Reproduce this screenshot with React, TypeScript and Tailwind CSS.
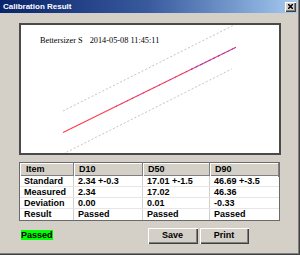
import React from 'react';

const rows = [
  ['Standard', '2.34 +-0.3', '17.01 +-1.5', '46.69 +-3.5'],
  ['Measured', '2.34', '17.02', '46.36'],
  ['Deviation', '0.00', '0.01', '-0.33'],
  ['Result', 'Passed', 'Passed', 'Passed'],
];

const headers = ['Item', 'D10', 'D50', 'D90'];
const cols = 'grid grid-cols-[54px_69px_67px_69px]';

function Bevel({ children, className = '' }: { children: React.ReactNode; className?: string }) {
  return (
    <div
      className={
        'flex items-center justify-center bg-[#d4d0c8] shadow-[inset_1px_1px_0_#ffffff,inset_-1px_-1px_0_#404040,inset_-2px_-2px_0_#808080] ' +
        className
      }
    >
      {children}
    </div>
  );
}

function Chart() {
  return (
    <div className="relative ml-[19px] mt-[10px] h-[132px] w-[262px] border-2 border-[#4a4a4a] bg-white">
      <svg className="absolute inset-0" width="258" height="128" viewBox="0 0 258 128">
        <line x1="42" y1="86" x2="215" y2="-1" stroke="#c4c4c4" strokeWidth="1" strokeDasharray="2 2" />
        <line x1="42" y1="129" x2="210.7" y2="44" stroke="#c4c4c4" strokeWidth="1" strokeDasharray="2 2" />
        <line x1="42" y1="107.5" x2="215" y2="22.3" stroke="#ff3b4e" strokeWidth="1.1" />
        <line x1="95" y1="81.4" x2="215" y2="22.3" stroke="#6a3cff" strokeWidth="1" strokeDasharray="1 5" />
        <line x1="170" y1="44.5" x2="215" y2="22.3" stroke="#6a3cff" strokeWidth="1" strokeDasharray="2 3" />
      </svg>
      <div className="relative flex pl-[19px] pt-[11px] font-['Liberation_Serif',serif] text-[8.3px] leading-[9px] text-black">
        <span>Bettersizer S</span>
        <span className="ml-[7px]">2014-05-08 11:45:11</span>
      </div>
    </div>
  );
}

function ResultTable() {
  return (
    <div className="ml-[19px] mt-[7px] w-[261px] border border-[#6a6a6a] bg-white font-['Liberation_Sans',Arial,sans-serif] text-[9px] font-bold text-black">
      <div className={cols + ' h-[13px] border-b border-[#808080] bg-[#d4d0c8]'}>
        {headers.map((h, i) => (
          <div
            key={h}
            className={
              'flex items-center border-r border-[#808080] shadow-[inset_1px_1px_0_#ffffff] ' +
              (i === 0 ? 'pl-[6px]' : 'pl-[5px]')
            }
          >
            {h}
          </div>
        ))}
      </div>
      {rows.map((r, ri) => (
        <div
          key={r[0]}
          className={cols + ' h-[11px] ' + (ri < rows.length - 1 ? 'border-b border-[#e6e6e6]' : '')}
        >
          {r.map((c, ci) => (
            <div
              key={ci}
              className={
                'flex items-center leading-none pl-[4px] ' + (ci < 3 ? 'border-r border-[#d4d0c8]' : '')
              }
            >
              {c}
            </div>
          ))}
        </div>
      ))}
    </div>
  );
}

export default function App() {
  return (
    <div className="flex h-[255px] w-[300px] flex-col overflow-hidden bg-[#d4d0c8] shadow-[inset_-1px_-1px_0_#404040,inset_-2px_-2px_0_#808080] font-['Liberation_Sans',Arial,sans-serif]">
      <div className="mr-[3px] flex h-[13px] items-center justify-between bg-linear-to-r from-[#0a246a] via-[#3a5a9e] to-[#a6caf0] pl-[3px] pr-[1px]">
        <span className="text-[8px] font-bold leading-none text-white">Calibration Result</span>
        <Bevel className="h-[10px] w-[11px]">
          <svg width="5" height="5" viewBox="0 0 5 5">
            <path d="M0 0L5 5M5 0L0 5" stroke="#000" strokeWidth="1.5" />
          </svg>
        </Bevel>
      </div>

      <Chart />
      <ResultTable />

      <div className="mt-[7px] flex items-start text-[9px] font-bold text-black">
        <div className="ml-[21px] mt-[2px] flex h-[10px] items-center bg-[#00ff00] leading-none">Passed</div>
        <Bevel className="ml-[95px] h-[16px] w-[50px]">Save</Bevel>
        <Bevel className="ml-[2px] h-[16px] w-[49px]">Print</Bevel>
      </div>
    </div>
  );
}
